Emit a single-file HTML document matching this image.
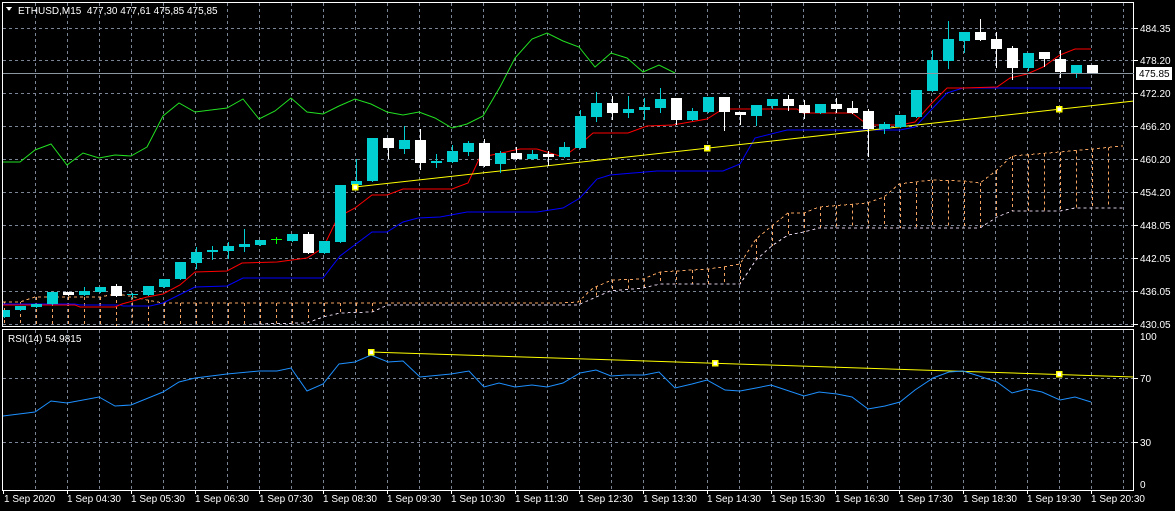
<!DOCTYPE html>
<html><head><meta charset="utf-8">
<style>
html,body{margin:0;padding:0;background:#000;width:1175px;height:511px;overflow:hidden}
svg{display:block}
text{font-family:"Liberation Sans",sans-serif;font-size:10px;fill:#fff}
</style></head><body>
<svg id="s" width="1175" height="511" viewBox="0 0 1175 511" xmlns="http://www.w3.org/2000/svg" shape-rendering="crispEdges">
<g id="grid" stroke="#7a8696" stroke-width="1" stroke-dasharray="3,3"></g>
<g id="cloud"></g>
<g id="lines" fill="none" shape-rendering="auto"></g>
<g id="candles"></g>
<g id="marks"></g>
<rect x="2.5" y="2.5" width="1131" height="324" fill="none" stroke="#fff"/>
<rect x="2.5" y="329.5" width="1131" height="161" fill="none" stroke="#fff"/>
<line x1="3" y1="73.5" x2="1134" y2="73.5" stroke="#8c96a0"/>
<polygon points="6,7 12,7 9,11" fill="#fff"/>
<text x="18" y="14">ETHUSD,M15&#160;&#160;477,30 477,61 475,85 475,85</text>
<text x="8" y="342">RSI(14) 54.9815</text>
<g id="ticks" stroke="#fff"></g>
<text x="1140" y="32">484.35</text>
<text x="1140" y="64">478.20</text>
<text x="1140" y="97">472.20</text>
<text x="1140" y="130">466.20</text>
<text x="1140" y="163">460.20</text>
<text x="1140" y="196">454.20</text>
<text x="1140" y="229">448.05</text>
<text x="1140" y="262">442.05</text>
<text x="1140" y="295">436.05</text>
<text x="1140" y="328">430.05</text>
<rect x="1136" y="67" width="36" height="13" fill="#fff"/>
<text x="1139" y="77" style="fill:#000">475.85</text>
<text x="1140" y="340">100</text>
<text x="1140" y="382">70</text>
<text x="1140" y="446">30</text>
<text x="1140" y="488">0</text>
<text x="4" y="502">1 Sep 2020</text>
<text x="67" y="502">1 Sep 04:30</text>
<text x="131" y="502">1 Sep 05:30</text>
<text x="195" y="502">1 Sep 06:30</text>
<text x="259" y="502">1 Sep 07:30</text>
<text x="323" y="502">1 Sep 08:30</text>
<text x="387" y="502">1 Sep 09:30</text>
<text x="451" y="502">1 Sep 10:30</text>
<text x="515" y="502">1 Sep 11:30</text>
<text x="579" y="502">1 Sep 12:30</text>
<text x="643" y="502">1 Sep 13:30</text>
<text x="707" y="502">1 Sep 14:30</text>
<text x="771" y="502">1 Sep 15:30</text>
<text x="835" y="502">1 Sep 16:30</text>
<text x="899" y="502">1 Sep 17:30</text>
<text x="963" y="502">1 Sep 18:30</text>
<text x="1027" y="502">1 Sep 19:30</text>
<text x="1091" y="502">1 Sep 20:30</text>
</svg>
<script>
var NS="http://www.w3.org/2000/svg";
function el(p,t,a){var e=document.createElementNS(NS,t);for(var k in a)e.setAttribute(k,a[k]);document.getElementById(p).appendChild(e);return e;}
var hy=[28,60,93,126,159,192,225,258,291,324];
hy.forEach(function(y){el('grid','line',{x1:3,y1:y+.5,x2:1134,y2:y+.5});el('ticks','line',{x1:1134,y1:y+.5,x2:1138,y2:y+.5});});
[378,442].forEach(function(y){el('grid','line',{x1:3,y1:y+.5,x2:1134,y2:y+.5});el('ticks','line',{x1:1134,y1:y+.5,x2:1138,y2:y+.5});});
for(var x=35;x<1134;x+=32){el('grid','line',{x1:x+.5,y1:3,x2:x+.5,y2:326});el('grid','line',{x1:x+.5,y1:330,x2:x+.5,y2:490});}
for(var x=3;x<1134;x+=64){el('ticks','line',{x1:x+.5,y1:490,x2:x+.5,y2:494});}
function pl(g,pts,col,w,dash){var a={points:pts.map(function(p){return p.join(',')}).join(' '),stroke:col,'stroke-width':w||1,fill:'none'};if(dash)a['stroke-dasharray']=dash;return el(g,'polyline',a);}
function interp(pts,x){if(x<=pts[0][0])return pts[0][1];for(var i=1;i<pts.length;i++){if(x<=pts[i][0]){var a=pts[i-1],b=pts[i];return a[1]+(b[1]-a[1])*(x-a[0])/(b[0]-a[0]);}}return pts[pts.length-1][1];}
var A=[[3,302],[20,302],[35,297],[100,297],[115,294],[130,296],[147,300],[163,303],[560,303],[578,302],[593,288],[612,280],[643,279],[660,272],[708,269],[723,267],[740,264],[756,239],[773,225],[788,213],[804,213],[819,207],[867,203],[884,197],[899,184],[932,180],[964,181],[980,183],[997,170],[1012,156],[1060,152],[1123,146]];
var B=[[3,340],[240,330],[253,324],[307,323],[323,317],[340,313],[372,312],[388,305],[560,305],[578,305],[610,291],[643,288],[660,284],[740,284],[756,260],[773,245],[788,235],[804,232],[819,228],[980,228],[997,217],[1012,211],[1060,211],[1075,208],[1123,208]];
for(var k=0;k<70;k++){var x=4+16*k;if(x>1124)break;var ya=interp(A,x),yb=Math.min(interp(B,x),326);if(yb-ya>3)el('cloud','line',{x1:x+.5,y1:ya,x2:x+.5,y2:yb,stroke:'#f4a460','stroke-dasharray':'3,3'});}
pl('cloud',B.filter(function(p){return p[1]<327}),'#d8c8e0',1,'3,3');
pl('cloud',A,'#f4a460',1,'3,3');
pl('lines',[[3,162],[20,162],[35,150],[51,144],[67,165],[83,153],[99,158],[115,155],[131,156],[147,147],[163,116],[179,103],[195,112],[227,108],[243,99],[259,119],[275,111],[291,98],[307,112],[323,114],[339,106],[355,99],[371,104],[387,112],[403,115],[419,112],[435,118],[452,128],[467,124],[483,116],[500,87],[515,58],[532,39],[547,33],[563,41],[579,47],[595,67],[611,53],[627,58],[643,72],[659,65],[675,73]],'#22e022');
pl('lines',[[3,304],[75,304],[80,305],[120,305],[123,306],[150,306],[163,303],[195,287],[227,286],[243,278],[323,278],[340,256],[372,232],[387,232],[403,222],[418,218],[440,217],[467,212],[537,212],[563,208],[580,198],[597,179],[610,175],[657,171],[723,171],[740,164],[755,138],[787,130],[900,130],[915,127],[947,93],[963,88],[1091,88]],'#0000ff');
pl('lines',[[3,305],[15,305],[45,305],[75,305],[80,307],[115,307],[122,304],[147,297],[163,294],[180,285],[195,272],[227,271],[242,263],[277,262],[307,258],[323,248],[338,217],[355,208],[372,195],[387,195],[403,189],[452,189],[468,183],[480,157],[487,156],[520,149],[537,149],[563,157],[577,147],[593,133],[628,133],[647,126],[673,125],[707,119],[723,109],[797,109],[803,113],[852,113],[868,125],[900,125],[915,122],[932,103],[947,88],[963,88],[997,87],[1010,78],[1027,74],[1043,67],[1060,55],[1075,49],[1091,49]],'#ff0000');
pl('lines',[[355,187],[1134,101]],'#ffff00');
pl('lines',[[371,352],[1134,377]],'#ffff00');
pl('lines',[[3,416],[35,412],[51,401],[67,403],[99,397],[115,406],[131,405],[163,392],[179,382],[195,378],[227,374],[259,371],[277,371],[291,368],[307,391],[323,384],[339,364],[355,362],[371,355],[388,362],[403,361],[420,377],[451,374],[469,371],[484,387],[499,383],[515,387],[532,385],[547,387],[563,383],[580,373],[596,370],[611,376],[626,375],[644,375],[659,372],[675,388],[692,384],[707,380],[725,390],[740,391],[756,388],[771,385],[786,390],[804,396],[819,392],[837,394],[852,397],[868,409],[885,406],[900,402],[915,390],[933,378],[949,372],[963,371],[979,376],[997,382],[1012,393],[1027,389],[1042,392],[1060,400],[1075,397],[1091,402]],'#1e90ff');
var C=[[310,317,310,317,'c'],[306,310,306,310,'c'],[304,307,304,307,'c'],[292,304,292,304,'c'],[292,295,292,295,'w'],[291,295,287,295,'c'],[287,292,287,292,'c'],[286,296,284,296,'w'],[294,295,293,297,'c'],[286,295,286,295,'c'],[279,287,279,287,'c'],[262,279,262,279,'c'],[252,263,247,268,'c'],[250,252,246,259,'c'],[246,251,242,258,'c'],[244,247,229,251,'c'],[240,245,240,245,'c'],[239,239,237,244,'g'],[234,241,234,241,'c'],[234,253,232,253,'w'],[241,253,241,253,'c'],[185,242,185,242,'c'],[181,185,159,185,'c'],[138,181,138,181,'c'],[138,148,138,158,'w'],[140,149,126,153,'c'],[140,163,129,169,'w'],[161,163,154,167,'c'],[151,162,145,162,'c'],[143,152,141,155,'c'],[143,166,139,166,'w'],[153,164,151,172,'c'],[153,159,147,159,'w'],[154,159,150,159,'c'],[154,157,151,165,'w'],[147,157,142,157,'c'],[116,148,110,148,'c'],[103,117,92,121,'c'],[103,113,96,119,'w'],[109,113,96,117,'c'],[107,110,98,119,'c'],[99,108,88,112,'c'],[98,120,98,124,'w'],[111,120,108,120,'c'],[97,112,97,112,'c'],[97,112,97,130,'w'],[112,115,112,124,'w'],[105,116,105,125,'c'],[99,106,99,108,'c'],[99,106,95,110,'w'],[105,113,100,118,'w'],[104,113,104,113,'c'],[104,109,98,112,'w'],[108,113,101,113,'w'],[111,129,109,156,'w'],[124,129,122,133,'c'],[115,127,115,127,'c'],[90,117,90,117,'c'],[60,91,50,91,'c'],[39,61,21,68,'c'],[32,41,32,52,'c'],[32,40,19,40,'w'],[39,49,32,67,'w'],[48,68,46,79,'w'],[53,68,53,70,'c'],[52,59,52,66,'w'],[59,72,50,77,'w'],[65,73,65,77,'c'],[65,73,65,73,'w']];
C.forEach(function(c,k){var cx=4+16*k;var col=c[4]=='c'?'#00ced1':(c[4]=='w'?'#ffffff':'#00ff00');
 if(c[4]=='g'){el('candles','line',{x1:cx-5,y1:c[0]+.5,x2:cx+6,y2:c[0]+.5,stroke:col});el('candles','line',{x1:cx+.5,y1:c[2],x2:cx+.5,y2:c[3],stroke:col});return;}
 el('candles','line',{x1:cx+.5,y1:c[2],x2:cx+.5,y2:c[3]+1,stroke:col,'stroke-width':1});
 var x0=Math.max(cx-5,3);el('candles','rect',{x:x0,y:c[0],width:cx+6-x0,height:Math.max(c[1]-c[0],1),fill:col});});
[[355,187],[707,148],[1059,109],[371,352],[715,363],[1059,374]].forEach(function(p){el('marks','rect',{x:p[0]-2.5,y:p[1]-2.5,width:5,height:5,fill:'#fff',stroke:'#ffff00','stroke-width':1.5});});
</script>
</body></html>
